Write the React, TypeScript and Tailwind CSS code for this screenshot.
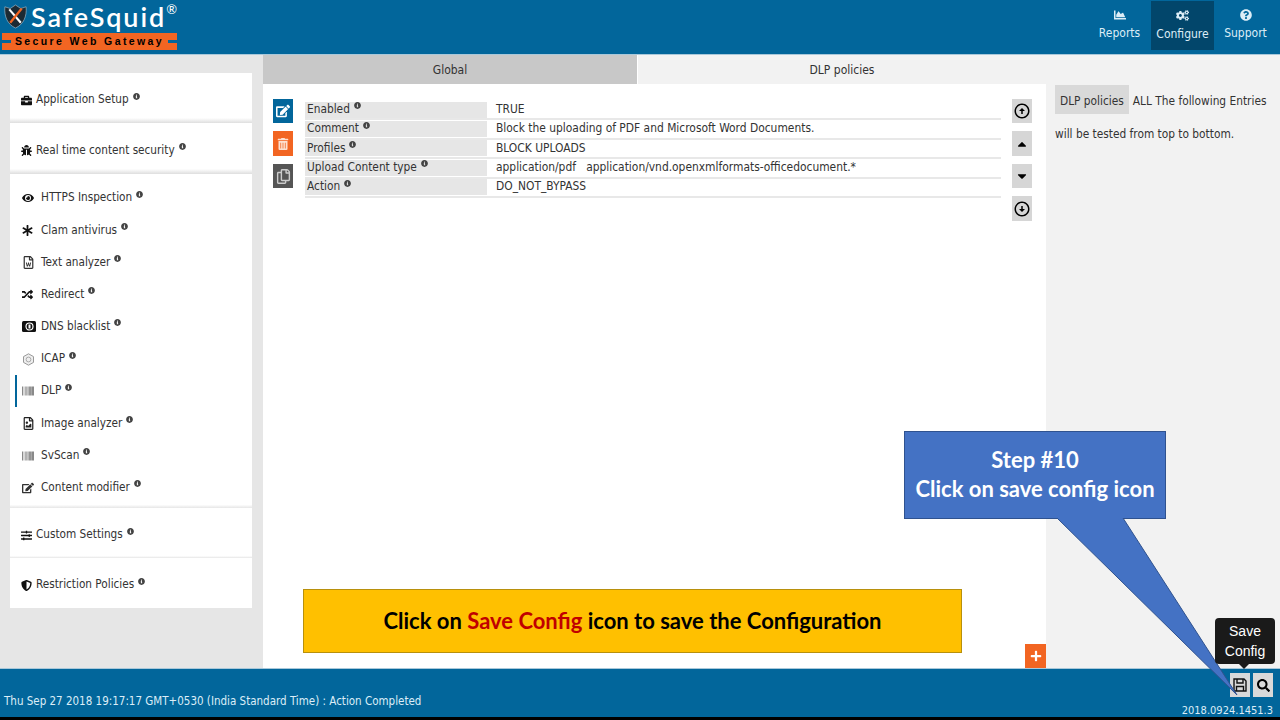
import type { ReactNode } from "react";
import {
  FaAsterisk, FaBarcode, FaBriefcase, FaBug, FaCaretDown, FaCaretUp, FaChartArea, FaCogs, FaEdit, FaEye, FaInfoCircle,
  FaPlus, FaQuestionCircle, FaRandom, FaRegCopy, FaRegFileImage, FaRegFileWord, FaSearch,
  FaShieldAlt, FaSlidersH, FaTrashAlt,
} from "react-icons/fa";
import { MdOutlineArrowCircleDown, MdOutlineArrowCircleUp } from "react-icons/md";

const font = "[font-family:'DejaVu_Sans_Condensed','DejaVu_Sans',sans-serif] [font-stretch:condensed]";

const DnsIcon = () => (
  <svg width="14" height="11" viewBox="0 0 14 11">
    <rect width="14" height="11" rx="1.5" fill="#111" />
    <circle cx="7.5" cy="5.5" r="3.5" fill="none" stroke="#fff" strokeWidth="1.2" />
    <rect x="6.5" y="3.5" width="2" height="4" fill="#fff" />
  </svg>
);

const IcapIcon = () => (
  <svg width="13" height="13" viewBox="0 0 13 13">
    <path d="M6.5 .8 11.5 3.6v5.8L6.5 12.2 1.5 9.4V3.6z" fill="#eee" stroke="#999" strokeWidth="1" />
    <circle cx="6.5" cy="6.5" r="2.4" fill="none" stroke="#aaa" strokeWidth="1" />
  </svg>
);

const SaveIcon = () => (
  <svg width="14" height="14" viewBox="0 0 14 14" fill="none" stroke="#111" strokeWidth="1.4">
    <path d="M1 1h10l2 2v10H1z" />
    <path d="M4 1v4h6V1" />
    <path d="M3.5 13V8.5h7V13" />
  </svg>
);

const items: { label: string; icon: ReactNode; active?: boolean }[] = [
  { label: "HTTPS Inspection", icon: <FaEye size={12} /> },
  { label: "Clam antivirus", icon: <FaAsterisk size={11} /> },
  { label: "Text analyzer", icon: <FaRegFileWord size={13} className="text-[#333]" /> },
  { label: "Redirect", icon: <FaRandom size={11} /> },
  { label: "DNS blacklist", icon: <DnsIcon /> },
  { label: "ICAP", icon: <IcapIcon /> },
  { label: "DLP", icon: <FaBarcode size={12} className="text-[#444]" />, active: true },
  { label: "Image analyzer", icon: <FaRegFileImage size={13} className="text-[#222]" /> },
  { label: "SvScan", icon: <FaBarcode size={12} className="text-[#444]" /> },
  { label: "Content modifier", icon: <FaEdit size={12} className="text-[#333]" /> },
];

const rows = [
  { label: "Enabled", value: "TRUE" },
  { label: "Comment", value: "Block the uploading of PDF and Microsoft Word Documents." },
  { label: "Profiles", value: "BLOCK UPLOADS" },
  { label: "Upload Content type", value: "application/pdf   application/vnd.openxmlformats-officedocument.*" },
  { label: "Action", value: "DO_NOT_BYPASS" },
];

const Info = () => <FaInfoCircle size={7} className="mb-[8px] ml-[4px] shrink-0 text-[#444]" />;

const SectionCard = ({ icon, label, className }: { icon: ReactNode; label: string; className: string }) => (
  <div className={`flex items-center pl-[11px] pt-[4px] ${className}`}>
    <span className="flex w-[15px] shrink-0 items-center text-[#111]">{icon}</span>
    <span>{label}</span>
    <Info />
  </div>
);

const SideButton = ({ children, className }: { children: ReactNode; className: string }) => (
  <div className={`flex h-[24px] w-[20px] items-center justify-center ${className}`}>{children}</div>
);

const Logo = () => (
  <div className="ml-[2px] flex w-[175px] flex-col">
    <div className="flex h-[33px] items-center">
      <svg width="23" height="27" viewBox="0 0 26 28" className="ml-[2px] shrink-0">
        <path d="M1 3 7 5 13 1 19 5 25 3C26 14 22 23 13 27 4 23 0 14 1 3Z" fill="#1c2a33" stroke="#c9d6de" strokeWidth=".6" />
        <path d="M6 6 19 21" stroke="#fff" strokeWidth="2.4" />
        <path d="M20 5 7 21" stroke="#f26522" strokeWidth="2.6" />
      </svg>
      <span className="ml-[4px] text-[27px] font-semibold leading-none tracking-[1.9px] text-white [font-family:'Lato',sans-serif]">SafeSquid</span>
      <span className="mb-[14px] text-[13px] leading-none text-white [font-family:'Lato',sans-serif]">®</span>
    </div>
    <div className="flex h-[17px] items-center bg-[#f26522] text-[10.5px] font-bold leading-none tracking-[2.4px] text-black [font-family:'Liberation_Sans',sans-serif]">
      <div className="h-[3px] w-[9px] shrink-0 bg-[#02669b]" />
      <span className="flex-1 text-center">Secure Web Gateway</span>
      <div className="h-[3px] w-[9px] shrink-0 bg-[#02669b]" />
    </div>
  </div>
);

const NavItem = ({ icon, label, active }: { icon: ReactNode; label: string; active?: boolean }) => (
  <div className={`flex h-[49px] w-[63px] flex-col items-center justify-center gap-[3px] ${active ? "bg-[#02466b]" : ""}`}>
    {icon}
    <span>{label}</span>
  </div>
);

export default function App() {
  return (
    <div className={`relative flex h-[720px] w-[1280px] flex-col overflow-hidden bg-white text-[12px] text-[#333] ${font}`}>
      <header className="flex h-[55px] shrink-0 items-start justify-between border-b border-[#a9c8da] bg-[#02669b] text-[#dcedf7]">
        <Logo />
        <nav className="mr-[3px] mt-px flex items-center">
          <NavItem icon={<FaChartArea size={12} />} label="Reports" />
          <NavItem icon={<FaCogs size={13} />} label="Configure" active />
          <NavItem icon={<FaQuestionCircle size={12} />} label="Support" />
        </nav>
      </header>

      <main className="flex min-h-0 flex-1">
        <aside className="w-[263px] shrink-0 bg-[#e6e6e6] pl-[10px] pr-[11px] pt-[18px]">
          <div className="flex flex-col bg-white text-[11.7px]">
            <SectionCard icon={<FaBriefcase size={11} />} label="Application Setup" className="h-[50px] bg-gradient-to-b from-white from-90% to-[#dedede]" />
            <SectionCard icon={<FaBug size={11} />} label="Real time content security" className="h-[51px] bg-gradient-to-b from-white from-90% to-[#dedede]" />
            <div className="flex h-[334px] flex-col bg-gradient-to-b from-white from-[99%] to-[#e6e6e6] pt-[8px]">
              {items.map((item) => (
                <div key={item.label} className="relative flex h-[32.2px] items-center pl-[12px]">
                  {item.active && <div className="absolute left-[5px] top-0 h-full w-[2px] bg-[#02669b]" />}
                  <span className="flex w-[19px] shrink-0 items-center text-[#111]">{item.icon}</span>
                  <span>{item.label}</span>
                  <Info />
                </div>
              ))}
            </div>
            <SectionCard icon={<FaSlidersH size={11} />} label="Custom Settings" className="h-[50px] bg-gradient-to-b from-white from-[96%] to-[#e6e6e6]" />
            <SectionCard icon={<FaShieldAlt size={11} />} label="Restriction Policies" className="h-[50px] bg-white" />
          </div>
        </aside>

        <section className="flex w-[783px] shrink-0 flex-col">
          <div className="flex h-[29px] shrink-0 items-center text-center">
            <div className="flex h-full w-[374px] items-center justify-center bg-[#c8c8c8]">Global</div>
            <div className="ml-px flex h-full flex-1 items-center justify-center bg-[#f2f2f2]">DLP policies</div>
          </div>
          <div className="flex flex-1 items-start pl-[10px] pt-[15px]">
            <div className="flex w-[20px] shrink-0 flex-col gap-[8px] text-white">
              <SideButton className="bg-[#02669b]"><FaEdit size={14} /></SideButton>
              <SideButton className="h-[25px] bg-[#f26522]"><FaTrashAlt size={12} className="text-[#fde0d0]" /></SideButton>
              <SideButton className="bg-[#555] text-[#ccc]"><FaRegCopy size={15} /></SideButton>
            </div>
            <div className="ml-[12px] w-[696px] pt-[2px]">
              {rows.map((row) => (
                <div key={row.label} className="flex h-[19.4px] items-center border-b-2 border-[#e8e8e8]">
                  <div className="flex h-[16px] w-[182px] shrink-0 items-center bg-[#e6e6e6] pl-[2px] text-[11.8px]">
                    <span>{row.label}</span>
                    <Info />
                  </div>
                  <span className="ml-[9px] whitespace-pre text-[11.9px]">{row.value}</span>
                </div>
              ))}
            </div>
            <div className="ml-[11px] flex flex-col gap-[8px] text-black">
              <SideButton className="bg-[#d6d6d6]"><MdOutlineArrowCircleUp size={18} /></SideButton>
              <SideButton className="h-[25px] bg-[#d6d6d6]"><FaCaretUp size={14} /></SideButton>
              <SideButton className="bg-[#d6d6d6]"><FaCaretDown size={14} /></SideButton>
              <SideButton className="h-[25px] bg-[#d6d6d6]"><MdOutlineArrowCircleDown size={18} /></SideButton>
            </div>
          </div>
        </section>

        <aside className="flex-1 bg-[#f2f2f2] pl-[9px] pr-[8px] pt-[29px] text-[11.8px] leading-[35px]">
          <span className="inline-block h-[29px] bg-[#d9d9d9] px-[5px] leading-[33px]">DLP policies</span>
          <span className="ml-[4px]">ALL The following Entries</span>
          <div className="-mt-[2px]">will be tested from top to bottom.</div>
        </aside>
      </main>

      <footer className="flex h-[49px] shrink-0 items-start justify-between border-t border-[#a9c8da] bg-[#02669b] pl-[4px] pr-[7px] pt-[4px] text-[#dcedf7]">
        <span className="mt-[20px] text-[11.5px]">Thu Sep 27 2018 19:17:17 GMT+0530 (India Standard Time) : Action Completed</span>
        <div className="flex flex-col items-end">
          <div className="flex gap-[3px] text-black">
            <div className="flex h-[24px] w-[20px] items-center justify-center bg-[#d9d9d9]"><SaveIcon /></div>
            <div className="flex h-[24px] w-[20px] items-center justify-center bg-[#d9d9d9]"><FaSearch size={13} /></div>
          </div>
          <span className="mt-[7px] text-[11px] leading-[14px]">2018.0924.1451.3</span>
        </div>
      </footer>
      <div className="h-[3px] shrink-0 bg-black" />

      {/* orange add button */}
      <div className="absolute left-[1025px] top-[644px] flex h-[24px] w-[21px] items-center justify-center bg-[#f26522] text-white">
        <FaPlus size={12} />
      </div>

      {/* callout overlay from the slide */}
      <div className="absolute left-[303px] top-[589px] flex h-[64px] w-[659px] items-center justify-center border border-[#b8900c] bg-[#ffc000] pb-[2px] text-[22px] font-bold text-black [font-family:'Lato',sans-serif] [font-stretch:normal]">
        <span>Click on <span className="text-[#c00000]">Save Config</span> icon to save the Configuration</span>
      </div>
      <div className="absolute left-[904px] top-[431px] flex h-[88px] w-[262px] flex-col items-center justify-center border border-[#2f528f] bg-[#4472c4] pb-[2px] text-[22px] font-bold leading-[29px] text-white [font-family:'Lato',sans-serif] [font-stretch:normal]">
        <span>Step #10</span>
        <span>Click on save config icon</span>
      </div>
      <svg className="absolute left-[1050px] top-[515px]" width="200" height="190" viewBox="0 0 200 190">
        <path d="M7 3 187 180 73 3Z" fill="#4472c4" />
        <path d="M7 3 187 180 73 3" fill="none" stroke="#2f528f" strokeWidth="1" />
      </svg>

      {/* tooltip */}
      <div className="absolute left-[1215px] top-[618px] flex h-[46px] w-[60px] flex-col items-center justify-center rounded-[4px] bg-[#1a1a1a] text-[14px] leading-[20px] text-white [font-family:'Liberation_Sans',sans-serif] [font-stretch:normal]">
        <span>Save</span>
        <span>Config</span>
        <div className="absolute -bottom-[5px] left-[24px] h-0 w-0 border-x-[5px] border-t-[5px] border-x-transparent border-t-[#1a1a1a]" />
      </div>
    </div>
  );
}
